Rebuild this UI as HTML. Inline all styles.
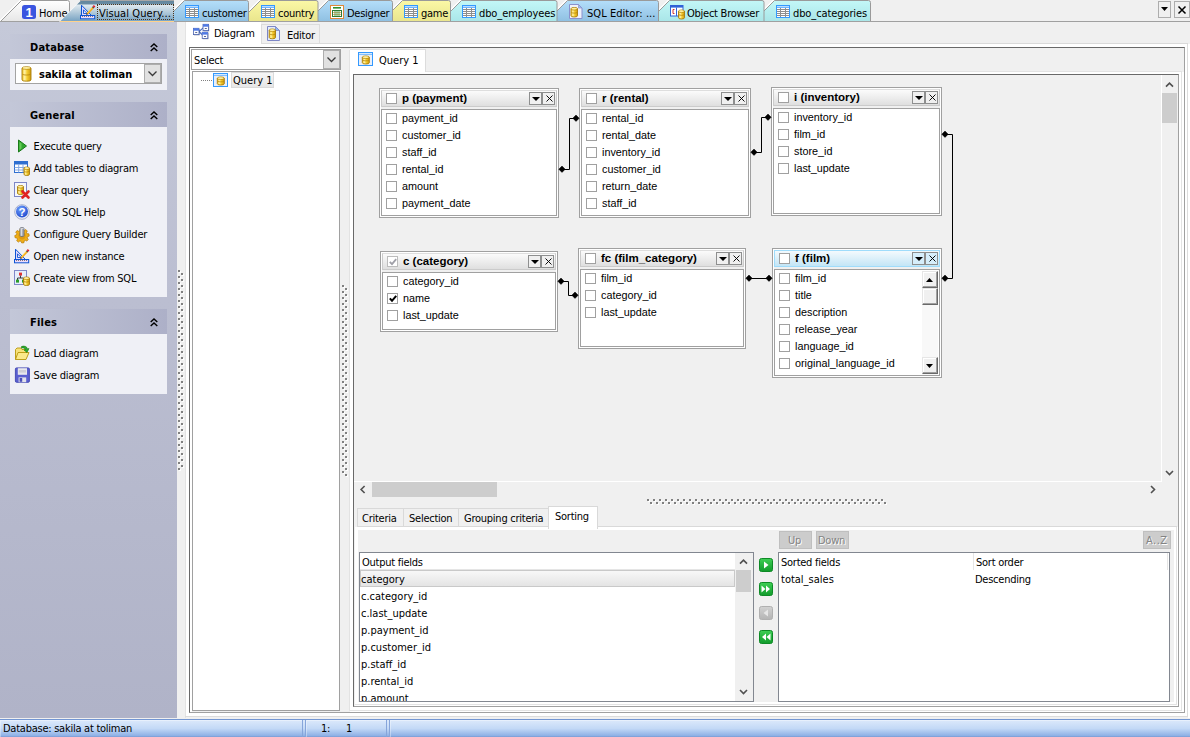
<!DOCTYPE html>
<html><head><meta charset="utf-8"><title>Visual Query Builder</title>
<style>
*{box-sizing:border-box;margin:0;padding:0}
html,body{width:1190px;height:737px;overflow:hidden;background:#f0f0f0}
body{position:relative;font-family:"DejaVu Sans Condensed","Liberation Sans",sans-serif;font-size:11px;letter-spacing:-0.25px;color:#000;line-height:13px}
.a{position:absolute}
.t{position:absolute;white-space:nowrap;height:13px;line-height:13px;margin-top:1px}
.b{letter-spacing:0}
.shead .t{letter-spacing:0.2px}
.ar{font-family:"Liberation Sans",sans-serif;font-size:11px}
.b{font-weight:bold}
svg{position:absolute;overflow:visible}
/* sidebar */
#side{left:0;top:22px;width:177px;height:696px;background:linear-gradient(to bottom,#c5c9d9 0%,#bbbed1 40%,#b0b3c8 100%)}
.shead{left:10px;width:157px;height:25px;background:linear-gradient(to right,#c3c7d8,#adb0c8)}
.sbody{left:10px;width:157px;background:#eff0f6}
.shead .t{left:20px;top:6px;font-weight:bold;font-size:11px}
.item{left:33.5px}
/* table boxes */
.box{border:1px solid #a0a0a0;background:#f0f0f0;box-shadow:inset 0 0 0 1px #fff}
.box .ttl{left:1px;right:1px;top:1px;height:17px;background:linear-gradient(to bottom,#fbfbfb,#dfdfdf);border:1px solid #cbcbcb;border-top-color:#dedede}
.box.act .ttl{background:linear-gradient(to bottom,#f4fafd,#c3e5f6);border:1px solid #9fdcfb}
.box .lst{left:1px;right:1px;top:20px;bottom:1px;background:#fff;border:1px solid #a0a0a0}
.cb{position:absolute;width:11px;height:11px;border:1px solid #a0a0a0;background:#fff}
.bt{position:absolute;width:13px;height:13px;border:1px solid #8e8f8f;top:3px}
.f{position:absolute;left:22px;white-space:nowrap;font-family:"Liberation Sans",sans-serif;font-size:10.8px;letter-spacing:0;height:13px;line-height:13px}
.tt{position:absolute;left:22px;top:3px;white-space:nowrap;font-family:"Liberation Sans",sans-serif;font-size:11.5px;letter-spacing:0;font-weight:bold;height:13px;line-height:13px}
</style></head>
<body>
<svg width="0" height="0" style="left:0;top:0"><defs><linearGradient id="cg" x1="0" y1="0" x2="1" y2="0"><stop offset="0" stop-color="#f3c625"/><stop offset="0.3" stop-color="#fff3a8"/><stop offset="0.55" stop-color="#f6cf33"/><stop offset="1" stop-color="#d09a0c"/></linearGradient></defs></svg><div class="a" style="left:0;top:0;width:1190px;height:22px;background:#f0f0f0"></div><div class="a" style="left:0;top:21px;width:1190px;height:1px;background:#a0a0a0;z-index:46"></div><svg style="left:1px;top:0;z-index:20" width="70" height="22" viewBox="0 0 70 22"><defs><linearGradient id="tg0" x1="0" y1="0" x2="0" y2="1"><stop offset="0" stop-color="#ffffff"/><stop offset="1" stop-color="#e6e6e6"/></linearGradient></defs><path d="M-0.5 21.5L20.5 0.5H66.5Q68.5 0.5 68.5 2.5V21.5z" fill="url(#tg0)"/><path d="M-1.2 20.800L19.800 -0.200" stroke="#fff" stroke-width="1.300" fill="none"/><path d="M-0.5 21.5L20.5 0.5H66.5Q68.5 0.5 68.5 2.5V21.5" stroke="#9a9a9a" stroke-width="1" fill="none"/></svg><svg style="left:164px;top:0;z-index:39" width="86" height="22" viewBox="0 0 86 22"><defs><linearGradient id="tg1" x1="0" y1="0" x2="0" y2="1"><stop offset="0" stop-color="#b4defa"/><stop offset="1" stop-color="#8fc0e2"/></linearGradient></defs><path d="M-0.5 21.5L20.5 0.5H82.5Q84.5 0.5 84.5 2.5V21.5z" fill="url(#tg1)"/><path d="M-1.2 20.800L19.800 -0.200" stroke="#fff" stroke-width="1.300" fill="none"/><path d="M-0.5 21.5L20.5 0.5H82.5Q84.5 0.5 84.5 2.5V21.5" stroke="#9a9a9a" stroke-width="1" fill="none"/></svg><svg style="left:239.5px;top:0;z-index:38" width="79.5" height="22" viewBox="0 0 79.5 22"><defs><linearGradient id="tg2" x1="0" y1="0" x2="0" y2="1"><stop offset="0" stop-color="#fbf8a6"/><stop offset="1" stop-color="#e9e58c"/></linearGradient></defs><path d="M-0.5 21.5L20.5 0.5H76.0Q78.0 0.5 78.0 2.5V21.5z" fill="url(#tg2)"/><path d="M-1.2 20.800L19.800 -0.200" stroke="#fff" stroke-width="1.300" fill="none"/><path d="M-0.5 21.5L20.5 0.5H76.0Q78.0 0.5 78.0 2.5V21.5" stroke="#9a9a9a" stroke-width="1" fill="none"/></svg><svg style="left:308px;top:0;z-index:37" width="86" height="22" viewBox="0 0 86 22"><defs><linearGradient id="tg3" x1="0" y1="0" x2="0" y2="1"><stop offset="0" stop-color="#b4defa"/><stop offset="1" stop-color="#8fc0e2"/></linearGradient></defs><path d="M-0.5 21.5L20.5 0.5H82.5Q84.5 0.5 84.5 2.5V21.5z" fill="url(#tg3)"/><path d="M-1.2 20.800L19.800 -0.200" stroke="#fff" stroke-width="1.300" fill="none"/><path d="M-0.5 21.5L20.5 0.5H82.5Q84.5 0.5 84.5 2.5V21.5" stroke="#9a9a9a" stroke-width="1" fill="none"/></svg><svg style="left:382px;top:0;z-index:36" width="70" height="22" viewBox="0 0 70 22"><defs><linearGradient id="tg4" x1="0" y1="0" x2="0" y2="1"><stop offset="0" stop-color="#fbf8a6"/><stop offset="1" stop-color="#e9e58c"/></linearGradient></defs><path d="M-0.5 21.5L20.5 0.5H66.5Q68.5 0.5 68.5 2.5V21.5z" fill="url(#tg4)"/><path d="M-1.2 20.800L19.800 -0.200" stroke="#fff" stroke-width="1.300" fill="none"/><path d="M-0.5 21.5L20.5 0.5H66.5Q68.5 0.5 68.5 2.5V21.5" stroke="#9a9a9a" stroke-width="1" fill="none"/></svg><svg style="left:440.5px;top:0;z-index:35" width="117.5" height="22" viewBox="0 0 117.5 22"><defs><linearGradient id="tg5" x1="0" y1="0" x2="0" y2="1"><stop offset="0" stop-color="#c3f7f7"/><stop offset="1" stop-color="#a9e6e8"/></linearGradient></defs><path d="M-0.5 21.5L20.5 0.5H114.0Q116.0 0.5 116.0 2.5V21.5z" fill="url(#tg5)"/><path d="M-1.2 20.800L19.800 -0.200" stroke="#fff" stroke-width="1.300" fill="none"/><path d="M-0.5 21.5L20.5 0.5H114.0Q116.0 0.5 116.0 2.5V21.5" stroke="#9a9a9a" stroke-width="1" fill="none"/></svg><svg style="left:547px;top:0;z-index:34" width="113" height="22" viewBox="0 0 113 22"><defs><linearGradient id="tg6" x1="0" y1="0" x2="0" y2="1"><stop offset="0" stop-color="#b4defa"/><stop offset="1" stop-color="#8fc0e2"/></linearGradient></defs><path d="M-0.5 21.5L20.5 0.5H109.5Q111.5 0.5 111.5 2.5V21.5z" fill="url(#tg6)"/><path d="M-1.2 20.800L19.800 -0.200" stroke="#fff" stroke-width="1.300" fill="none"/><path d="M-0.5 21.5L20.5 0.5H109.5Q111.5 0.5 111.5 2.5V21.5" stroke="#9a9a9a" stroke-width="1" fill="none"/></svg><svg style="left:648.5px;top:0;z-index:33" width="116.5" height="22" viewBox="0 0 116.5 22"><defs><linearGradient id="tg7" x1="0" y1="0" x2="0" y2="1"><stop offset="0" stop-color="#c3f7f7"/><stop offset="1" stop-color="#a9e6e8"/></linearGradient></defs><path d="M-0.5 21.5L20.5 0.5H113.0Q115.0 0.5 115.0 2.5V21.5z" fill="url(#tg7)"/><path d="M-1.2 20.800L19.800 -0.200" stroke="#fff" stroke-width="1.300" fill="none"/><path d="M-0.5 21.5L20.5 0.5H113.0Q115.0 0.5 115.0 2.5V21.5" stroke="#9a9a9a" stroke-width="1" fill="none"/></svg><svg style="left:754px;top:0;z-index:32" width="118" height="22" viewBox="0 0 118 22"><defs><linearGradient id="tg8" x1="0" y1="0" x2="0" y2="1"><stop offset="0" stop-color="#c3f7f7"/><stop offset="1" stop-color="#a9e6e8"/></linearGradient></defs><path d="M-0.5 21.5L20.5 0.5H114.5Q116.5 0.5 116.5 2.5V21.5z" fill="url(#tg8)"/><path d="M-1.2 20.800L19.800 -0.200" stroke="#fff" stroke-width="1.300" fill="none"/><path d="M-0.5 21.5L20.5 0.5H114.5Q116.5 0.5 116.5 2.5V21.5" stroke="#9a9a9a" stroke-width="1" fill="none"/></svg><div class="t" style="left:39px;top:6px;z-index:21">Home</div><div class="t" style="left:202px;top:6px;z-index:45">customer</div><div class="t" style="left:278px;top:6px;z-index:45">country</div><div class="t" style="left:347px;top:6px;z-index:45">Designer</div><div class="t" style="left:421px;top:6px;z-index:45">game</div><div class="t" style="left:479px;top:6px;z-index:45;letter-spacing:-0.1px">dbo_employees</div><div class="t" style="left:587px;top:6px;z-index:45;letter-spacing:0.05px">SQL Editor: ...</div><div class="t" style="left:687px;top:6px;z-index:45">Object Browser</div><div class="t" style="left:793px;top:6px;z-index:45;letter-spacing:-0.1px">dbo_categories</div><svg style="left:22px;top:5px;z-index:21" width="14" height="14" viewBox="0 0 14 14"><rect width="14" height="14" rx="2.5" fill="#3a55e0"/><text x="7" y="12" font-family="Liberation Sans,sans-serif" font-weight="bold" font-size="13" fill="#fff" text-anchor="middle">1</text></svg><svg style="z-index:45;left:185px;top:5px" width="14" height="13" viewBox="0 0 14 13" shape-rendering="crispEdges"><rect x="0" y="0" width="14" height="13" fill="#3399ff"/><rect x="1" y="1" width="12" height="1" fill="#b9dcff"/><rect x="1" y="2" width="12" height="1" fill="#6db5ff"/><rect x="1" y="3" width="12" height="9" fill="#8e8e8e"/><rect x="1" y="3" width="3" height="1" fill="#fff"/><rect x="5" y="3" width="4" height="1" fill="#fff"/><rect x="10" y="3" width="3" height="1" fill="#fff"/><rect x="1" y="5" width="3" height="1" fill="#fff"/><rect x="5" y="5" width="4" height="1" fill="#fff"/><rect x="10" y="5" width="3" height="1" fill="#fff"/><rect x="1" y="7" width="3" height="1" fill="#fff"/><rect x="5" y="7" width="4" height="1" fill="#fff"/><rect x="10" y="7" width="3" height="1" fill="#fff"/><rect x="1" y="9" width="3" height="1" fill="#fff"/><rect x="5" y="9" width="4" height="1" fill="#fff"/><rect x="10" y="9" width="3" height="1" fill="#fff"/><rect x="1" y="11" width="3" height="1" fill="#fff"/><rect x="5" y="11" width="4" height="1" fill="#fff"/><rect x="10" y="11" width="3" height="1" fill="#fff"/></svg><svg style="z-index:45;left:261px;top:5px" width="14" height="13" viewBox="0 0 14 13" shape-rendering="crispEdges"><rect x="0" y="0" width="14" height="13" fill="#3399ff"/><rect x="1" y="1" width="12" height="1" fill="#b9dcff"/><rect x="1" y="2" width="12" height="1" fill="#6db5ff"/><rect x="1" y="3" width="12" height="9" fill="#8e8e8e"/><rect x="1" y="3" width="3" height="1" fill="#fff"/><rect x="5" y="3" width="4" height="1" fill="#fff"/><rect x="10" y="3" width="3" height="1" fill="#fff"/><rect x="1" y="5" width="3" height="1" fill="#fff"/><rect x="5" y="5" width="4" height="1" fill="#fff"/><rect x="10" y="5" width="3" height="1" fill="#fff"/><rect x="1" y="7" width="3" height="1" fill="#fff"/><rect x="5" y="7" width="4" height="1" fill="#fff"/><rect x="10" y="7" width="3" height="1" fill="#fff"/><rect x="1" y="9" width="3" height="1" fill="#fff"/><rect x="5" y="9" width="4" height="1" fill="#fff"/><rect x="10" y="9" width="3" height="1" fill="#fff"/><rect x="1" y="11" width="3" height="1" fill="#fff"/><rect x="5" y="11" width="4" height="1" fill="#fff"/><rect x="10" y="11" width="3" height="1" fill="#fff"/></svg><svg style="z-index:45;left:404px;top:5px" width="14" height="13" viewBox="0 0 14 13" shape-rendering="crispEdges"><rect x="0" y="0" width="14" height="13" fill="#3399ff"/><rect x="1" y="1" width="12" height="1" fill="#b9dcff"/><rect x="1" y="2" width="12" height="1" fill="#6db5ff"/><rect x="1" y="3" width="12" height="9" fill="#8e8e8e"/><rect x="1" y="3" width="3" height="1" fill="#fff"/><rect x="5" y="3" width="4" height="1" fill="#fff"/><rect x="10" y="3" width="3" height="1" fill="#fff"/><rect x="1" y="5" width="3" height="1" fill="#fff"/><rect x="5" y="5" width="4" height="1" fill="#fff"/><rect x="10" y="5" width="3" height="1" fill="#fff"/><rect x="1" y="7" width="3" height="1" fill="#fff"/><rect x="5" y="7" width="4" height="1" fill="#fff"/><rect x="10" y="7" width="3" height="1" fill="#fff"/><rect x="1" y="9" width="3" height="1" fill="#fff"/><rect x="5" y="9" width="4" height="1" fill="#fff"/><rect x="10" y="9" width="3" height="1" fill="#fff"/><rect x="1" y="11" width="3" height="1" fill="#fff"/><rect x="5" y="11" width="4" height="1" fill="#fff"/><rect x="10" y="11" width="3" height="1" fill="#fff"/></svg><svg style="z-index:45;left:462px;top:5px" width="14" height="13" viewBox="0 0 14 13" shape-rendering="crispEdges"><rect x="0" y="0" width="14" height="13" fill="#3399ff"/><rect x="1" y="1" width="12" height="1" fill="#b9dcff"/><rect x="1" y="2" width="12" height="1" fill="#6db5ff"/><rect x="1" y="3" width="12" height="9" fill="#8e8e8e"/><rect x="1" y="3" width="3" height="1" fill="#fff"/><rect x="5" y="3" width="4" height="1" fill="#fff"/><rect x="10" y="3" width="3" height="1" fill="#fff"/><rect x="1" y="5" width="3" height="1" fill="#fff"/><rect x="5" y="5" width="4" height="1" fill="#fff"/><rect x="10" y="5" width="3" height="1" fill="#fff"/><rect x="1" y="7" width="3" height="1" fill="#fff"/><rect x="5" y="7" width="4" height="1" fill="#fff"/><rect x="10" y="7" width="3" height="1" fill="#fff"/><rect x="1" y="9" width="3" height="1" fill="#fff"/><rect x="5" y="9" width="4" height="1" fill="#fff"/><rect x="10" y="9" width="3" height="1" fill="#fff"/><rect x="1" y="11" width="3" height="1" fill="#fff"/><rect x="5" y="11" width="4" height="1" fill="#fff"/><rect x="10" y="11" width="3" height="1" fill="#fff"/></svg><svg style="z-index:45;left:776px;top:5px" width="14" height="13" viewBox="0 0 14 13" shape-rendering="crispEdges"><rect x="0" y="0" width="14" height="13" fill="#3399ff"/><rect x="1" y="1" width="12" height="1" fill="#b9dcff"/><rect x="1" y="2" width="12" height="1" fill="#6db5ff"/><rect x="1" y="3" width="12" height="9" fill="#8e8e8e"/><rect x="1" y="3" width="3" height="1" fill="#fff"/><rect x="5" y="3" width="4" height="1" fill="#fff"/><rect x="10" y="3" width="3" height="1" fill="#fff"/><rect x="1" y="5" width="3" height="1" fill="#fff"/><rect x="5" y="5" width="4" height="1" fill="#fff"/><rect x="10" y="5" width="3" height="1" fill="#fff"/><rect x="1" y="7" width="3" height="1" fill="#fff"/><rect x="5" y="7" width="4" height="1" fill="#fff"/><rect x="10" y="7" width="3" height="1" fill="#fff"/><rect x="1" y="9" width="3" height="1" fill="#fff"/><rect x="5" y="9" width="4" height="1" fill="#fff"/><rect x="10" y="9" width="3" height="1" fill="#fff"/><rect x="1" y="11" width="3" height="1" fill="#fff"/><rect x="5" y="11" width="4" height="1" fill="#fff"/><rect x="10" y="11" width="3" height="1" fill="#fff"/></svg><svg style="z-index:45;left:330px;top:5px" width="14" height="14" viewBox="0 0 14 14"><rect x="0.5" y="0.5" width="13" height="13" fill="#fff" stroke="#de8a3a"/><rect x="3" y="2" width="8" height="1.6" fill="#2f8f2f"/><rect x="2.5" y="5.5" width="9" height="6" fill="#fff" stroke="#2d7a32"/><path d="M3 7.5h8M3 9.5h8" stroke="#e8a060" stroke-width="0.8" fill="none"/><path d="M5 6v5M7 6v5M9 6v5" stroke="#3c9a3c" stroke-width="0.9" fill="none"/></svg><svg style="z-index:45;left:569px;top:4px" width="14" height="15" viewBox="0 0 14 15"><path d="M0.5 0.5h9l3.500 3.500v10.500h-12.500z" fill="#eef1fb" stroke="#8a90cc"/><path d="M9.500 0.500v3.500h3.500z" fill="#9cc0f0" stroke="#8a90cc" stroke-width="0.7"/><path d="M2 4.8V11.7a3.25 1.3 0 0 0 6.5 0V4.8a3.25 1.3 0 0 0 -6.5 0z" fill="url(#cg)" stroke="#a67c0c" stroke-width="0.9"/><ellipse cx="5.25" cy="4.8" rx="2.75" ry="1.0" fill="#fdeea0"/><path d="M2 4.8a3.25 1.3 0 0 0 6.5 0" fill="none" stroke="#b8860b" stroke-width="0.7"/><path d="M2.4 8.440000000000001a3.25 1.3 0 0 0 5.7 0" fill="none" stroke="#b8860b" stroke-width="0.8"/></svg><svg style="z-index:45;left:670px;top:5px" width="15" height="15" viewBox="0 0 15 15"><rect x="0.5" y="0.5" width="12.5" height="10.5" fill="#fff" stroke="#2f62d8"/><rect x="1" y="1" width="12" height="1.6" fill="#2f62d8"/><path d="M6.500 2.500v8.500" stroke="#2f62d8"/><path d="M4.500 4.500h-1.500v4h1.500" stroke="#d03030" fill="none" stroke-width="1"/><path d="M8.5 6.3V12.7a3.0 1.3 0 0 0 6 0V6.3a3.0 1.3 0 0 0 -6 0z" fill="url(#cg)" stroke="#a67c0c" stroke-width="0.9"/><ellipse cx="11.5" cy="6.3" rx="2.5" ry="1.0" fill="#fdeea0"/><path d="M8.5 6.3a3.0 1.3 0 0 0 6 0" fill="none" stroke="#b8860b" stroke-width="0.7"/><path d="M8.9 9.68a3.0 1.3 0 0 0 5.2 0" fill="none" stroke="#b8860b" stroke-width="0.8"/></svg><svg style="left:60px;top:0;z-index:50" width="114" height="22" viewBox="0 0 114 22"><defs><linearGradient id="tga" x1="0" y1="0" x2="0" y2="1"><stop offset="0" stop-color="#62859c"/><stop offset="0.19" stop-color="#6a8da4"/><stop offset="0.2" stop-color="#e2ebf1"/><stop offset="0.55" stop-color="#b6cddc"/><stop offset="1" stop-color="#78a3c3"/></linearGradient></defs><path d="M-1 22L21 0H114V22z" fill="#fff"/><path d="M0.5 21L21 0.5H114V21z" fill="url(#tga)"/><path d="M20 0.5H114" stroke="#a6a6a6" stroke-width="1"/><path d="M0 21.5H114" stroke="#ffd28a" stroke-width="1"/></svg><div class="a" style="left:97px;top:4px;width:77px;height:16px;border:1px dotted #4a3520;z-index:51"></div><svg style="z-index:51;left:80px;top:4px" width="16" height="16" viewBox="0 0 16 16"><path d="M1.5 1.200V11.500H11.500z" fill="#e2d9fd" stroke="#0d54d4" stroke-width="1" stroke-linejoin="miter"/><path d="M3.500 5.800V9.500H7.200z" fill="#f4f0ff" stroke="#0d54d4" stroke-width="0.9"/><rect x="0.500" y="11.500" width="14.200" height="3.300" fill="#eadcfd" stroke="#0d54d4" stroke-width="1"/><path d="M2.500 12v1M4.500 12v1M6.500 12v1M8.500 12v1M10.500 12v1M12.500 12v1" stroke="#6a5a5a" stroke-width="0.800"/><path d="M7.300 9.800L13.300 3.300" stroke="#f7a81e" stroke-width="1.900"/><path d="M6.900 9.300L12.800 2.900" stroke="#ffe24a" stroke-width="0.700"/><path d="M6.200 10.900l0.500-1.800 1.300 1.200z" fill="#3a2a1a"/><path d="M12.700 3.900l0.900-1" stroke="#4a4a4a" stroke-width="1.800"/><path d="M13.500 3l1.100-1.200" stroke="#ea1c2a" stroke-width="2.200"/></svg><div class="t" style="left:99px;top:6px;z-index:51;letter-spacing:0.1px">Visual Query...</div><div class="a" style="left:1158px;top:1px;width:13px;height:17px;border:1px solid #adadad;background:#f0f0f0"></div><svg style="left:1161px;top:7px" width="7" height="4" viewBox="0 0 7 4"><path d="M0 0h7l-3.5 4z" fill="#000"/></svg><div class="a" style="left:1174px;top:1px;width:16px;height:17px;border:1px solid #adadad;background:#f0f0f0"></div><svg style="left:1178px;top:6px" width="8" height="8" viewBox="0 0 8 8"><path d="M0.5 0.5l7 7M7.5 0.5l-7 7" stroke="#000" stroke-width="1.5"/></svg>
<div id="side" class="a"><div class="a shead" style="top:12px"><div class="t">Database</div></div><svg style="left:150px;top:21px" width="8" height="9" viewBox="0 0 8 9"><path d="M0.7 4l3.3-3 3.3 3M0.7 8l3.3-3 3.3 3" stroke="#000" stroke-width="1.4" fill="none"/></svg><div class="a sbody" style="top:37px;height:31px"></div><div class="a" style="left:15px;top:41px;width:147px;height:21px;border:1px solid #a3a3a3;background:#fff"></div><div class="a" style="left:144px;top:42px;width:17px;height:19px;border:1px solid #adadad;background:#e1e1e1"></div><svg style="left:148px;top:49px" width="9" height="5" viewBox="0 0 9 5"><path d="M0.500 0.500l4 4 4-4" stroke="#3a3a3a" stroke-width="1.300" fill="none"/></svg><svg style="left:21px;top:44px" width="11" height="16" viewBox="0 0 11 16"><path d="M1 2.1V13.9a4.5 1.3 0 0 0 9 0V2.1a4.5 1.3 0 0 0 -9 0z" fill="url(#cg)" stroke="#a67c0c" stroke-width="0.9"/><ellipse cx="5.5" cy="2.1" rx="4.0" ry="1.0" fill="#fdeea0"/><path d="M1 2.1a4.5 1.3 0 0 0 9 0" fill="none" stroke="#b8860b" stroke-width="0.7"/><path d="M1.4 8.288a4.5 1.3 0 0 0 8.2 0" fill="none" stroke="#b8860b" stroke-width="0.8"/></svg><div class="t b" style="left:39px;top:45px;font-size:11px">sakila at toliman</div><div class="a shead" style="top:80px"><div class="t">General</div></div><svg style="left:150px;top:89px" width="8" height="9" viewBox="0 0 8 9"><path d="M0.7 4l3.3-3 3.3 3M0.7 8l3.3-3 3.3 3" stroke="#000" stroke-width="1.4" fill="none"/></svg><div class="a sbody" style="top:105px;height:170px"></div><svg style="left:14px;top:116px" width="16" height="16" viewBox="0 0 16 16"><path d="M4.5 2v12l8-6z" fill="#2fa62f" stroke="#1a7a1a" stroke-width="1" stroke-linejoin="round"/><path d="M5.5 4v8l2-1.5v-5z" fill="#7ddc6a" opacity="0.7"/></svg><div class="t item" style="top:117px">Execute query</div><svg style="left:14px;top:138px" width="16" height="16" viewBox="0 0 16 16"><rect x="0.5" y="1.5" width="13" height="11" fill="#fff" stroke="#2f6fd0"/><rect x="1" y="2" width="12" height="2.5" fill="#2f6fd0"/><path d="M0.5 7.5h13M0.5 10h13M4.7 4.5v8M9 4.5v8" stroke="#7da3e0" stroke-width="0.9" fill="none"/><path d="M10 8.3V14.2a2.75 1.3 0 0 0 5.5 0V8.3a2.75 1.3 0 0 0 -5.5 0z" fill="url(#cg)" stroke="#a67c0c" stroke-width="0.9"/><ellipse cx="12.75" cy="8.3" rx="2.25" ry="1.0" fill="#fdeea0"/><path d="M10 8.3a2.75 1.3 0 0 0 5.5 0" fill="none" stroke="#b8860b" stroke-width="0.7"/><path d="M10.4 11.42a2.75 1.3 0 0 0 4.7 0" fill="none" stroke="#b8860b" stroke-width="0.8"/></svg><div class="t item" style="top:139px">Add tables to diagram</div><svg style="left:14px;top:160px" width="16" height="16" viewBox="0 0 16 16"><rect x="0.5" y="0.5" width="12" height="14" fill="#f4f6fb" stroke="#7d86c6"/><path d="M3.5 4.8V11.2a3.0 1.3 0 0 0 6 0V4.8a3.0 1.3 0 0 0 -6 0z" fill="url(#cg)" stroke="#a67c0c" stroke-width="0.9"/><ellipse cx="6.5" cy="4.8" rx="2.5" ry="1.0" fill="#fdeea0"/><path d="M3.5 4.8a3.0 1.3 0 0 0 6 0" fill="none" stroke="#b8860b" stroke-width="0.7"/><path d="M3.9 8.18a3.0 1.3 0 0 0 5.2 0" fill="none" stroke="#b8860b" stroke-width="0.8"/><path d="M8.5 9.5l6 6M14.5 9.5l-6 6" stroke="#e02222" stroke-width="2.6" stroke-linecap="round"/></svg><div class="t item" style="top:161px">Clear query</div><svg style="left:14px;top:182px" width="16" height="16" viewBox="0 0 16 16"><defs><radialGradient id="hg" cx="0.4" cy="0.3" r="0.8"><stop offset="0" stop-color="#6fa0ff"/><stop offset="1" stop-color="#1742c8"/></radialGradient></defs><circle cx="8" cy="8" r="7.3" fill="#e8ecf8" stroke="#9aa3c0" stroke-width="0.8"/><circle cx="8" cy="7.6" r="6" fill="url(#hg)"/><text x="8" y="12" font-family="Liberation Sans,sans-serif" font-weight="bold" font-size="11.5" fill="#fff" text-anchor="middle">?</text></svg><div class="t item" style="top:183px">Show SQL Help</div><svg style="left:14px;top:204px" width="16" height="16" viewBox="0 0 16 16"><path d="M13.17 11.94L14.28 13.32L12.89 15.09L11.29 14.33L10.14 14.97L9.95 16.73L7.72 16.99L7.12 15.33L5.86 14.97L4.48 16.08L2.71 14.69L3.47 13.09L2.83 11.94L1.07 11.75L0.81 9.52L2.47 8.92L2.83 7.66L1.72 6.28L3.11 4.51L4.71 5.27L5.86 4.63L6.05 2.87L8.28 2.61L8.88 4.27L10.14 4.63L11.52 3.52L13.29 4.91L12.53 6.51L13.17 7.66L14.93 7.85L15.19 10.08L13.53 10.68z" fill="#f0ae18" stroke="#b47a06" stroke-width="0.7" stroke-linejoin="round"/><circle cx="8" cy="9.8" r="3.6" fill="#dc9a12"/><path d="M6 2.4V9.6a2 0.9 0 0 0 4 0V2.4a2 0.9 0 0 0 -4 0z" fill="#a9adb6" stroke="#666a73" stroke-width="0.8"/><rect x="6.7" y="3" width="1.1" height="6.8" fill="#e4e6ea"/><ellipse cx="8" cy="2.4" rx="1.6" ry="0.6" fill="#d4d6dc"/></svg><div class="t item" style="top:205px">Configure Query Builder</div><svg style="left:14px;top:226px" width="16" height="16" viewBox="0 0 16 16"><path d="M1.5 1.200V11.500H11.500z" fill="#e2d9fd" stroke="#0d54d4" stroke-width="1" stroke-linejoin="miter"/><path d="M3.500 5.800V9.500H7.200z" fill="#f4f0ff" stroke="#0d54d4" stroke-width="0.9"/><rect x="0.500" y="11.500" width="14.200" height="3.300" fill="#eadcfd" stroke="#0d54d4" stroke-width="1"/><path d="M2.500 12v1M4.500 12v1M6.500 12v1M8.500 12v1M10.500 12v1M12.500 12v1" stroke="#6a5a5a" stroke-width="0.800"/><path d="M7.300 9.800L13.300 3.300" stroke="#f7a81e" stroke-width="1.900"/><path d="M6.900 9.300L12.800 2.900" stroke="#ffe24a" stroke-width="0.700"/><path d="M6.200 10.900l0.500-1.800 1.300 1.200z" fill="#3a2a1a"/><path d="M12.700 3.900l0.900-1" stroke="#4a4a4a" stroke-width="1.800"/><path d="M13.500 3l1.100-1.200" stroke="#ea1c2a" stroke-width="2.200"/></svg><div class="t item" style="top:227px">Open new instance</div><svg style="left:14px;top:248px" width="16" height="16" viewBox="0 0 16 16"><rect x="0.5" y="0.5" width="12" height="14" fill="#e6eefb" stroke="#8088c8"/><rect x="5" y="2.6" width="3" height="3" fill="#e23030"/><path d="M6.5 5.6v2.4M3.5 10V8h6v2" stroke="#2a2a2a" stroke-width="0.9" fill="none"/><rect x="2" y="9.6" width="3" height="3" fill="#2a9b2a"/><rect x="8" y="9.6" width="3" height="3" fill="#2a9b2a"/><path d="M9.5 8.3V14.2a3.0 1.3 0 0 0 6 0V8.3a3.0 1.3 0 0 0 -6 0z" fill="url(#cg)" stroke="#a67c0c" stroke-width="0.9"/><ellipse cx="12.5" cy="8.3" rx="2.5" ry="1.0" fill="#fdeea0"/><path d="M9.5 8.3a3.0 1.3 0 0 0 6 0" fill="none" stroke="#b8860b" stroke-width="0.7"/><path d="M9.9 11.42a3.0 1.3 0 0 0 5.2 0" fill="none" stroke="#b8860b" stroke-width="0.8"/></svg><div class="t item" style="top:249px">Create view from SQL</div><div class="a shead" style="top:287px"><div class="t">Files</div></div><svg style="left:150px;top:296px" width="8" height="9" viewBox="0 0 8 9"><path d="M0.7 4l3.3-3 3.3 3M0.7 8l3.3-3 3.3 3" stroke="#000" stroke-width="1.4" fill="none"/></svg><div class="a sbody" style="top:312px;height:60px"></div><svg style="left:14px;top:323px" width="16" height="16" viewBox="0 0 16 16"><path d="M1.500 14.500v-10l1.500-1.500h4l1 1.500h4.500v3" fill="#f7e27a" stroke="#b8960b" stroke-width="0.9"/><path d="M1.500 14.500l2.500-7h11l-3 7z" fill="#fbe98a" stroke="#b8960b" stroke-width="0.9" stroke-linejoin="round"/><path d="M7.500 1.500c3-1 5.500 0 6 2.500l1.500-0.500-2 4-3-2.500 1.500-0.400c-0.600-1.400-2-2-4-1.600z" fill="#2faa2f" stroke="#157a15" stroke-width="0.6"/></svg><div class="t item" style="top:324px">Load diagram</div><svg style="left:14px;top:345px" width="16" height="16" viewBox="0 0 16 16"><rect x="1.4" y="0.9" width="14" height="14.400" rx="1.200" fill="#5a5fd0" stroke="#4045b0" stroke-width="0.9"/><rect x="3.800" y="1.200" width="9.200" height="6.600" fill="#e8e8ec"/><rect x="4.800" y="3" width="7.200" height="2.600" fill="#cfcfd6"/><rect x="4.600" y="10.400" width="7.600" height="4.800" fill="#e2e2ea"/><rect x="5.600" y="11" width="2.600" height="3.800" fill="#4a4fb8"/></svg><div class="t item" style="top:346px">Save diagram</div></div>
<div class="a" style="left:177px;top:22px;width:1013px;height:696px;background:#f0f0f0;"></div><div class="a" style="left:186px;top:44px;width:1002px;height:673px;background:#fff;"></div><div class="a" style="left:185px;top:22px;width:1px;height:696px;background:#e3e3e3"></div><div class="a" style="left:186px;top:43px;width:1002px;height:1px;background:#dadada"></div><div class="a" style="left:1187px;top:44px;width:1px;height:673px;background:#dcdcdc"></div><div class="a" style="left:185px;top:716px;width:1003px;height:1px;background:#dcdcdc"></div><div class="a" style="left:1188px;top:44px;width:2px;height:674px;background:#fff;"></div><div class="a" style="left:186px;top:22px;width:75px;height:23px;background:#fff;"></div><svg style="left:193px;top:24px" width="16" height="16" viewBox="0 0 16 16"><path d="M6 7.500l4.500-3.800M6 7.500l4 4" stroke="#4a6ec0" stroke-width="1.100" fill="none"/><rect x="1.0" y="5.1" width="5.600" height="6.200" fill="#2c3a5e" opacity="0.55"/><rect x="0.4" y="4.3" width="5.600" height="6.300" fill="#fbfcff" stroke="#4a63b0" stroke-width="0.800"/><rect x="0.4" y="4.3" width="5.600" height="2.400" fill="#4f7ae6"/><rect x="2.2" y="8.1" width="2" height="0.900" fill="#4a5a88"/><rect x="10.6" y="1.1" width="5.600" height="6.200" fill="#2c3a5e" opacity="0.55"/><rect x="10" y="0.3" width="5.600" height="6.300" fill="#fbfcff" stroke="#4a63b0" stroke-width="0.800"/><rect x="10" y="0.3" width="5.600" height="2.400" fill="#4f7ae6"/><rect x="11.8" y="4.1" width="2" height="0.900" fill="#4a5a88"/><rect x="9.799999999999999" y="9.0" width="5.600" height="6.200" fill="#2c3a5e" opacity="0.55"/><rect x="9.2" y="8.2" width="5.600" height="6.300" fill="#fbfcff" stroke="#4a63b0" stroke-width="0.800"/><rect x="9.2" y="8.2" width="5.600" height="2.400" fill="#4f7ae6"/><rect x="11.0" y="12.0" width="2" height="0.900" fill="#4a5a88"/></svg><div class="t" style="left:214px;top:26px">Diagram</div><div class="a" style="left:261px;top:24px;width:59px;height:20px;background:#f0f0f0;border:1px solid #dcdcdc"></div><svg style="left:267px;top:26px" width="13" height="15" viewBox="0 0 13 15"><path d="M0.500 0.500h8l4 4v10h-12z" fill="#e3edfb" stroke="#7d86c6"/><path d="M8.500 0.500v4h4z" fill="#8fbaf2" stroke="#7d86c6" stroke-width="0.800"/><path d="M2.2 4.3V11.5a3.15 1.3 0 0 0 6.3 0V4.3a3.15 1.3 0 0 0 -6.3 0z" fill="url(#cg)" stroke="#a67c0c" stroke-width="0.9"/><ellipse cx="5.35" cy="4.3" rx="2.65" ry="1.0" fill="#fdeea0"/><path d="M2.2 4.3a3.15 1.3 0 0 0 6.3 0" fill="none" stroke="#b8860b" stroke-width="0.7"/><path d="M2.6 8.096a3.15 1.3 0 0 0 5.5 0" fill="none" stroke="#b8860b" stroke-width="0.8"/></svg><div class="t" style="left:287px;top:28px">Editor</div><div class="a" style="left:189px;top:47px;width:996px;height:666px;background:#f0f0f0;border:1px solid #696969;border-right-color:#a0a0a0;border-bottom-color:#a0a0a0"></div><div class="a" style="left:190px;top:48px;width:151px;height:23px;background:#fff;"></div><div class="a" style="left:191px;top:49px;width:150px;height:21px;background:#fff;border:1px solid #a0a0a0"></div><div class="t" style="left:194px;top:53px">Select</div><div class="a" style="left:323px;top:50px;width:17px;height:19px;border:1px solid #adadad;background:#e1e1e1"></div><svg style="left:327.0px;top:57.0px" width="9" height="5" viewBox="0 0 9 5"><path d="M0.500 0.500l4 4 4-4" stroke="#3a3a3a" stroke-width="1.300" fill="none"/></svg><div class="a" style="left:192px;top:71px;width:148px;height:640px;background:#fff;border:1px solid #a0a0a0"></div><div class="a" style="left:190px;top:70px;width:2px;height:642px;background:#fff;"></div><svg style="left:201px;top:80px" width="12" height="1" viewBox="0 0 12 1"><path d="M0 0.500h12" stroke="#808080" stroke-width="1" stroke-dasharray="1 1"/></svg><svg style="left:213px;top:73px" width="15" height="14" viewBox="0 0 15 14"><rect x="0.5" y="0.5" width="14" height="13" fill="#e9eff9" stroke="#3399ff"/><rect x="1" y="1" width="13" height="1.2" fill="#d6ebff"/><rect x="1" y="2" width="13" height="1" fill="#3399ff" opacity="0.55"/><path d="M4.3 5.3V10.7a3.5 1.3 0 0 0 7 0V5.3a3.5 1.3 0 0 0 -7 0z" fill="url(#cg)" stroke="#a67c0c" stroke-width="0.9"/><ellipse cx="7.8" cy="5.3" rx="3.0" ry="1.0" fill="#fdeea0"/><path d="M4.3 5.3a3.5 1.3 0 0 0 7 0" fill="none" stroke="#b8860b" stroke-width="0.7"/><path d="M4.7 8.16a3.5 1.3 0 0 0 6.2 0" fill="none" stroke="#b8860b" stroke-width="0.8"/></svg><div class="a" style="left:231px;top:72px;width:43px;height:16px;background:linear-gradient(to bottom,#f6f6f6,#e6e6e6);border:1px solid #dadada"></div><div class="t" style="left:233px;top:73px;letter-spacing:0">Query 1</div><div class="a" style="left:341px;top:48px;width:9px;height:664px;background:#f0f0f0;"></div><div class="a" style="left:350px;top:48px;width:834px;height:24px;background:#f0f0f0;"></div><div class="a" style="left:349px;top:50px;width:1px;height:661px;background:#e3e3e3"></div><div class="a" style="left:350px;top:49px;width:76px;height:23px;background:#fff;border:1px solid #dcdcdc;border-bottom:none;border-left:none"></div><svg style="left:358px;top:52px" width="15" height="14" viewBox="0 0 15 14"><rect x="0.5" y="0.5" width="14" height="13" fill="#e9eff9" stroke="#3399ff"/><rect x="1" y="1" width="13" height="1.2" fill="#d6ebff"/><rect x="1" y="2" width="13" height="1" fill="#3399ff" opacity="0.55"/><path d="M4.3 5.3V10.7a3.5 1.3 0 0 0 7 0V5.3a3.5 1.3 0 0 0 -7 0z" fill="url(#cg)" stroke="#a67c0c" stroke-width="0.9"/><ellipse cx="7.8" cy="5.3" rx="3.0" ry="1.0" fill="#fdeea0"/><path d="M4.3 5.3a3.5 1.3 0 0 0 7 0" fill="none" stroke="#b8860b" stroke-width="0.7"/><path d="M4.7 8.16a3.5 1.3 0 0 0 6.2 0" fill="none" stroke="#b8860b" stroke-width="0.8"/></svg><div class="t" style="left:379px;top:53px;letter-spacing:0">Query 1</div><div class="a" style="left:426px;top:71px;width:756px;height:1px;background:#e3e3e3"></div><div class="a" style="left:350px;top:72px;width:834px;height:640px;background:#fff;"></div><div class="a" style="left:1181px;top:72px;width:1px;height:639px;background:#e3e3e3"></div><div class="a" style="left:350px;top:710px;width:832px;height:1px;background:#e3e3e3"></div><div class="a" style="left:353px;top:74px;width:826px;height:633px;background:#f0f0f0;border:1px solid #696969;border-right-color:#a0a0a0;border-bottom-color:#a0a0a0"></div><div class="a" style="left:354px;top:481px;width:808px;height:1px;background:#fff"></div><div class="a" style="left:1161px;top:75px;width:1px;height:407px;background:#fff"></div><div class="a" style="left:1162px;top:93px;width:15px;height:30px;background:#cdcdcd;"></div><svg style="left:1165px;top:82px" width="9" height="6" viewBox="0 0 9 6"><path d="M1 4.600l3.500-3.500 3.500 3.500" stroke="#505050" stroke-width="1.600" fill="none"/></svg><svg style="left:1165px;top:470px" width="9" height="6" viewBox="0 0 9 6"><path d="M1 1l3.500 3.500 3.500-3.500" stroke="#505050" stroke-width="1.600" fill="none"/></svg><div class="a" style="left:372px;top:482px;width:125px;height:15px;background:#cdcdcd;"></div><svg style="left:360px;top:485px" width="6" height="9" viewBox="0 0 6 9"><path d="M4.600 1l-3.500 3.500 3.500 3.500" stroke="#505050" stroke-width="1.600" fill="none"/></svg><svg style="left:1150px;top:485px" width="6" height="9" viewBox="0 0 6 9"><path d="M1 1l3.500 3.500-3.500 3.500" stroke="#505050" stroke-width="1.600" fill="none"/></svg><svg style="left:178px;top:270px" width="6" height="201" viewBox="0 0 6 201"><defs><pattern id="gv178" width="6" height="6" patternUnits="userSpaceOnUse"><rect x="1" y="1" width="2" height="2" fill="#fff"/><rect x="0" y="0" width="2" height="2" fill="#808080"/><rect x="4" y="4" width="2" height="2" fill="#fff"/><rect x="3" y="3" width="2" height="2" fill="#808080"/></pattern></defs><rect width="6" height="201" fill="url(#gv178)"/></svg><svg style="left:342px;top:285px" width="6" height="192" viewBox="0 0 6 192"><defs><pattern id="gv342" width="6" height="6" patternUnits="userSpaceOnUse"><rect x="1" y="1" width="2" height="2" fill="#fff"/><rect x="0" y="0" width="2" height="2" fill="#808080"/><rect x="4" y="4" width="2" height="2" fill="#fff"/><rect x="3" y="3" width="2" height="2" fill="#808080"/></pattern></defs><rect width="6" height="192" fill="url(#gv342)"/></svg><svg style="left:647px;top:499px" width="240" height="6" viewBox="0 0 240 6"><defs><pattern id="gh499" width="6" height="6" patternUnits="userSpaceOnUse"><rect x="1" y="1" width="2" height="2" fill="#fff"/><rect x="0" y="0" width="2" height="2" fill="#808080"/><rect x="4" y="4" width="2" height="2" fill="#fff"/><rect x="3" y="3" width="2" height="2" fill="#808080"/></pattern></defs><rect width="240" height="6" fill="url(#gh499)"/></svg>
<div class="a box" style="left:379px;top:88px;width:180px;height:130px"><div class="a ttl"></div><div class="cb" style="left:6px;top:4px"></div><div class="tt">p (payment)</div><div class="bt" style="left:149px;background:#f0f0f0"></div><div class="bt" style="left:162px;background:#f0f0f0"></div><svg style="left:152px;top:8px" width="8" height="4" viewBox="0 0 8 4"><path d="M0 0h8l-4 4z" fill="#000"/></svg><svg style="left:166px;top:6px" width="7" height="7" viewBox="0 0 7 7"><path d="M0.500 0.500l6 6M6.500 0.500l-6 6" stroke="#000" stroke-width="0.950"/></svg><div class="a lst"></div><div class="cb" style="left:6px;top:24px"></div><div class="f" style="top:23px">payment_id</div><div class="cb" style="left:6px;top:41px"></div><div class="f" style="top:40px">customer_id</div><div class="cb" style="left:6px;top:58px"></div><div class="f" style="top:57px">staff_id</div><div class="cb" style="left:6px;top:75px"></div><div class="f" style="top:74px">rental_id</div><div class="cb" style="left:6px;top:92px"></div><div class="f" style="top:91px">amount</div><div class="cb" style="left:6px;top:109px"></div><div class="f" style="top:108px">payment_date</div></div><div class="a box" style="left:579px;top:88px;width:172px;height:130px"><div class="a ttl"></div><div class="cb" style="left:6px;top:4px"></div><div class="tt">r (rental)</div><div class="bt" style="left:141px;background:#f0f0f0"></div><div class="bt" style="left:154px;background:#f0f0f0"></div><svg style="left:144px;top:8px" width="8" height="4" viewBox="0 0 8 4"><path d="M0 0h8l-4 4z" fill="#000"/></svg><svg style="left:158px;top:6px" width="7" height="7" viewBox="0 0 7 7"><path d="M0.500 0.500l6 6M6.500 0.500l-6 6" stroke="#000" stroke-width="0.950"/></svg><div class="a lst"></div><div class="cb" style="left:6px;top:24px"></div><div class="f" style="top:23px">rental_id</div><div class="cb" style="left:6px;top:41px"></div><div class="f" style="top:40px">rental_date</div><div class="cb" style="left:6px;top:58px"></div><div class="f" style="top:57px">inventory_id</div><div class="cb" style="left:6px;top:75px"></div><div class="f" style="top:74px">customer_id</div><div class="cb" style="left:6px;top:92px"></div><div class="f" style="top:91px">return_date</div><div class="cb" style="left:6px;top:109px"></div><div class="f" style="top:108px">staff_id</div></div><div class="a box" style="left:771px;top:87px;width:171px;height:129px"><div class="a ttl"></div><div class="cb" style="left:6px;top:4px"></div><div class="tt">i (inventory)</div><div class="bt" style="left:140px;background:#f0f0f0"></div><div class="bt" style="left:153px;background:#f0f0f0"></div><svg style="left:143px;top:8px" width="8" height="4" viewBox="0 0 8 4"><path d="M0 0h8l-4 4z" fill="#000"/></svg><svg style="left:157px;top:6px" width="7" height="7" viewBox="0 0 7 7"><path d="M0.500 0.500l6 6M6.500 0.500l-6 6" stroke="#000" stroke-width="0.950"/></svg><div class="a lst"></div><div class="cb" style="left:6px;top:24px"></div><div class="f" style="top:23px">inventory_id</div><div class="cb" style="left:6px;top:41px"></div><div class="f" style="top:40px">film_id</div><div class="cb" style="left:6px;top:58px"></div><div class="f" style="top:57px">store_id</div><div class="cb" style="left:6px;top:75px"></div><div class="f" style="top:74px">last_update</div></div><div class="a box" style="left:380px;top:251px;width:178px;height:81px"><div class="a ttl"></div><div class="cb" style="left:6px;top:4px;border-color:#bcbcbc"></div><svg style="left:8px;top:6px" width="8" height="8" viewBox="0 0 8 8"><path d="M0.800 3.800l2.200 2.400 4.200-5" stroke="#a0a0a8" stroke-width="1.800" fill="none"/></svg><div class="tt">c (category)</div><div class="bt" style="left:147px;background:#f0f0f0"></div><div class="bt" style="left:160px;background:#f0f0f0"></div><svg style="left:150px;top:8px" width="8" height="4" viewBox="0 0 8 4"><path d="M0 0h8l-4 4z" fill="#000"/></svg><svg style="left:164px;top:6px" width="7" height="7" viewBox="0 0 7 7"><path d="M0.500 0.500l6 6M6.500 0.500l-6 6" stroke="#000" stroke-width="0.950"/></svg><div class="a lst"></div><div class="cb" style="left:6px;top:24px"></div><div class="f" style="top:23px">category_id</div><div class="cb" style="left:6px;top:41px"></div><svg style="left:8px;top:43px" width="8" height="8" viewBox="0 0 8 8"><path d="M0.800 3.400l2.200 2.400 4.200-5" stroke="#000" stroke-width="2" fill="none"/></svg><div class="f" style="top:40px">name</div><div class="cb" style="left:6px;top:58px"></div><div class="f" style="top:57px">last_update</div></div><div class="a box" style="left:578px;top:248px;width:168px;height:101px"><div class="a ttl"></div><div class="cb" style="left:6px;top:4px"></div><div class="tt">fc (film_category)</div><div class="bt" style="left:137px;background:#f0f0f0"></div><div class="bt" style="left:150px;background:#f0f0f0"></div><svg style="left:140px;top:8px" width="8" height="4" viewBox="0 0 8 4"><path d="M0 0h8l-4 4z" fill="#000"/></svg><svg style="left:154px;top:6px" width="7" height="7" viewBox="0 0 7 7"><path d="M0.500 0.500l6 6M6.500 0.500l-6 6" stroke="#000" stroke-width="0.950"/></svg><div class="a lst"></div><div class="cb" style="left:6px;top:24px"></div><div class="f" style="top:23px">film_id</div><div class="cb" style="left:6px;top:41px"></div><div class="f" style="top:40px">category_id</div><div class="cb" style="left:6px;top:58px"></div><div class="f" style="top:57px">last_update</div></div><div class="a box act" style="left:772px;top:248px;width:170px;height:130px"><div class="a ttl"></div><div class="cb" style="left:6px;top:4px"></div><div class="tt">f (film)</div><div class="bt" style="left:139px;background:#d6eefb"></div><div class="bt" style="left:152px;background:#d6eefb"></div><svg style="left:142px;top:8px" width="8" height="4" viewBox="0 0 8 4"><path d="M0 0h8l-4 4z" fill="#000"/></svg><svg style="left:156px;top:6px" width="7" height="7" viewBox="0 0 7 7"><path d="M0.500 0.500l6 6M6.500 0.500l-6 6" stroke="#000" stroke-width="0.950"/></svg><div class="a lst"></div><div class="cb" style="left:6px;top:24px"></div><div class="f" style="top:23px">film_id</div><div class="cb" style="left:6px;top:41px"></div><div class="f" style="top:40px">title</div><div class="cb" style="left:6px;top:58px"></div><div class="f" style="top:57px">description</div><div class="cb" style="left:6px;top:75px"></div><div class="f" style="top:74px">release_year</div><div class="cb" style="left:6px;top:92px"></div><div class="f" style="top:91px">language_id</div><div class="cb" style="left:6px;top:109px"></div><div class="f" style="top:108px">original_language_id</div><div class="a" style="left:149px;top:22px;width:16px;height:104px;background:#f8f8f8"></div><div class="a" style="left:149px;top:22px;width:16px;height:17px;background:#f0f0f0;border:1px solid;border-color:#e6e6e6 #696969 #696969 #e6e6e6;box-shadow:inset -1px -1px 0 #a0a0a0,inset 1px 1px 0 #fff"></div><svg style="left:153px;top:29px" width="7" height="4" viewBox="0 0 7 4"><path d="M0 4h7l-3.500-4z" fill="#000"/></svg><div class="a" style="left:149px;top:39px;width:16px;height:17px;background:#f0f0f0;border:1px solid;border-color:#e6e6e6 #696969 #696969 #e6e6e6;box-shadow:inset -1px -1px 0 #a0a0a0,inset 1px 1px 0 #fff"></div><div class="a" style="left:149px;top:108px;width:16px;height:17px;background:#f0f0f0;border:1px solid;border-color:#e6e6e6 #696969 #696969 #e6e6e6;box-shadow:inset -1px -1px 0 #a0a0a0,inset 1px 1px 0 #fff"></div><svg style="left:153px;top:115px" width="7" height="4" viewBox="0 0 7 4"><path d="M0 0h7l-3.500 4z" fill="#000"/></svg></div><svg style="left:0;top:0" width="1190" height="737" viewBox="0 0 1190 737"><path d="M562 169.5H569.5V118.5H576" stroke="#000" stroke-width="1" fill="none"/><path d="M754 152.5H761.5V117.5H768" stroke="#000" stroke-width="1" fill="none"/><path d="M945 134.5H952.5V278.5H945" stroke="#000" stroke-width="1" fill="none"/><path d="M561 281.5H568.5V295.5H575" stroke="#000" stroke-width="1" fill="none"/><path d="M749 278.5H769" stroke="#000" stroke-width="1" fill="none"/><path d="M558.8 169.2L562 166.0L565.2 169.2L562 172.39999999999998z" fill="#000" stroke="#000" stroke-width="0.5"/><path d="M572.8 118.2L576 115.0L579.2 118.2L576 121.4z" fill="#000" stroke="#000" stroke-width="0.5"/><path d="M750.8 152.2L754 149.0L757.2 152.2L754 155.39999999999998z" fill="#000" stroke="#000" stroke-width="0.5"/><path d="M764.8 117.2L768 114.0L771.2 117.2L768 120.4z" fill="#000" stroke="#000" stroke-width="0.5"/><path d="M941.8 134.2L945 131.0L948.2 134.2L945 137.39999999999998z" fill="#000" stroke="#000" stroke-width="0.5"/><path d="M941.8 278.2L945 275.0L948.2 278.2L945 281.4z" fill="#000" stroke="#000" stroke-width="0.5"/><path d="M557.8 281.2L561 278.0L564.2 281.2L561 284.4z" fill="#000" stroke="#000" stroke-width="0.5"/><path d="M571.8 295.2L575 292.0L578.2 295.2L575 298.4z" fill="#000" stroke="#000" stroke-width="0.5"/><path d="M745.8 278.2L749 275.0L752.2 278.2L749 281.4z" fill="#000" stroke="#000" stroke-width="0.5"/><path d="M765.8 278.2L769 275.0L772.2 278.2L769 281.4z" fill="#000" stroke="#000" stroke-width="0.5"/></svg>
<div class="a" style="left:357px;top:508px;width:47px;height:19px;background:#f0f0f0;border:1px solid #d9d9d9"></div><div class="t" style="left:362px;top:511px">Criteria</div><div class="a" style="left:403px;top:508px;width:56px;height:19px;background:#f0f0f0;border:1px solid #d9d9d9"></div><div class="t" style="left:409px;top:511px">Selection</div><div class="a" style="left:458px;top:508px;width:91px;height:19px;background:#f0f0f0;border:1px solid #d9d9d9"></div><div class="t" style="left:464px;top:511px">Grouping criteria</div><div class="a" style="left:355px;top:527px;width:823px;height:179px;background:#fff;"></div><div class="a" style="left:1176px;top:527px;width:1px;height:178px;background:#e3e3e3"></div><div class="a" style="left:355px;top:704px;width:822px;height:1px;background:#e3e3e3"></div><div class="a" style="left:598px;top:526px;width:579px;height:1px;background:#d9d9d9"></div><div class="a" style="left:358px;top:530px;width:816px;height:172px;background:#f0f0f0;"></div><div class="a" style="left:548px;top:506px;width:50px;height:23px;background:#fff;border:1px solid #d9d9d9;border-bottom:none"></div><div class="t" style="left:555px;top:509px">Sorting</div><div class="a" style="left:359px;top:552px;width:395px;height:150px;background:#fff;border:1px solid #828790"></div><div class="a" style="left:360px;top:569px;width:375px;height:1px;background:#e5e5e5"></div><div class="t" style="left:362px;top:555px">Output fields</div><div class="a" style="left:360px;top:570px;width:375px;height:17px;background:linear-gradient(to bottom,#f8f8f8,#e4e4e4);border:1px solid #c9c9c9"></div><div class="a" style="left:360px;top:553px;width:375px;height:148px;overflow:hidden"><div class="t" style="left:1px;top:19px;letter-spacing:0">category</div><div class="t" style="left:1px;top:36px;letter-spacing:0">c.category_id</div><div class="t" style="left:1px;top:53px;letter-spacing:0">c.last_update</div><div class="t" style="left:1px;top:70px;letter-spacing:0">p.payment_id</div><div class="t" style="left:1px;top:87px;letter-spacing:0">p.customer_id</div><div class="t" style="left:1px;top:104px;letter-spacing:0">p.staff_id</div><div class="t" style="left:1px;top:121px;letter-spacing:0">p.rental_id</div><div class="t" style="left:1px;top:138px;letter-spacing:0">p.amount</div></div><div class="a" style="left:735px;top:553px;width:18px;height:148px;background:#f0f0f0;"></div><div class="a" style="left:736px;top:570px;width:15px;height:22px;background:#cdcdcd;"></div><svg style="left:739px;top:559px" width="9" height="6" viewBox="0 0 9 6"><path d="M1 4.600l3.500-3.500 3.500 3.500" stroke="#505050" stroke-width="1.600" fill="none"/></svg><svg style="left:739px;top:689px" width="9" height="6" viewBox="0 0 9 6"><path d="M1 1l3.500 3.500 3.500-3.500" stroke="#505050" stroke-width="1.600" fill="none"/></svg><svg style="left:759px;top:558px" width="14" height="14" viewBox="0 0 14 14"><defs><linearGradient id="gb759558" x1="0" y1="0" x2="0" y2="1"><stop offset="0" stop-color="#3fcf55"/><stop offset="1" stop-color="#119a2b"/></linearGradient></defs><rect x="0.500" y="0.500" width="13" height="13" rx="2" fill="url(#gb759558)" stroke="#0e8a26"/><path d="M5 3.500v7l4.500-3.500z" fill="#fff"/></svg><svg style="left:759px;top:582px" width="14" height="14" viewBox="0 0 14 14"><defs><linearGradient id="gb759582" x1="0" y1="0" x2="0" y2="1"><stop offset="0" stop-color="#3fcf55"/><stop offset="1" stop-color="#119a2b"/></linearGradient></defs><rect x="0.500" y="0.500" width="13" height="13" rx="2" fill="url(#gb759582)" stroke="#0e8a26"/><path d="M2.500 3.500v7l4-3.500zM7 3.500v7l4-3.500z" fill="#fff"/></svg><svg style="left:759px;top:606px" width="14" height="14" viewBox="0 0 14 14"><defs><linearGradient id="gb759606" x1="0" y1="0" x2="0" y2="1"><stop offset="0" stop-color="#d2d2d2"/><stop offset="1" stop-color="#b4b4b4"/></linearGradient></defs><rect x="0.500" y="0.500" width="13" height="13" rx="2" fill="url(#gb759606)" stroke="#b0b0b0"/><path d="M9 3.500v7l-4.500-3.500z" fill="#e6e6e6"/></svg><svg style="left:759px;top:630px" width="14" height="14" viewBox="0 0 14 14"><defs><linearGradient id="gb759630" x1="0" y1="0" x2="0" y2="1"><stop offset="0" stop-color="#3fcf55"/><stop offset="1" stop-color="#119a2b"/></linearGradient></defs><rect x="0.500" y="0.500" width="13" height="13" rx="2" fill="url(#gb759630)" stroke="#0e8a26"/><path d="M11.500 3.500v7l-4-3.500zM7 3.500v7l-4-3.500z" fill="#fff"/></svg><div class="a" style="left:779px;top:531px;width:33px;height:18px;background:#cccccc;border:1px solid #bfbfbf"></div><div class="t" style="left:788px;top:533px;color:#838383;text-shadow:1px 1px 0 #fff;">Up</div><div class="a" style="left:816px;top:531px;width:33px;height:18px;background:#cccccc;border:1px solid #bfbfbf"></div><div class="t" style="left:818px;top:533px;color:#838383;text-shadow:1px 1px 0 #fff;">Down</div><div class="a" style="left:1143px;top:531px;width:28px;height:18px;background:#cccccc;border:1px solid #bfbfbf"></div><div class="t" style="left:1146px;top:533px;color:#838383;text-shadow:1px 1px 0 #fff;letter-spacing:0.5px">A..Z</div><div class="a" style="left:778px;top:552px;width:392px;height:150px;background:#fff;border:1px solid #828790"></div><div class="a" style="left:973px;top:553px;width:1px;height:17px;background:#e5e5e5"></div><div class="a" style="left:1167px;top:553px;width:1px;height:17px;background:#e5e5e5"></div><div class="t" style="left:781px;top:555px">Sorted fields</div><div class="t" style="left:976px;top:555px">Sort order</div><div class="t" style="left:781px;top:572px;letter-spacing:0">total_sales</div><div class="t" style="left:975px;top:572px">Descending</div>
<div class="a" style="left:0px;top:719px;width:1190px;height:18px;background:linear-gradient(to bottom,#dce9fb 0%,#c3d9f6 50%,#8fb1e6 92%,#7a9ad3 100%);border-top:1px solid #7396d2"></div><div class="a" style="left:-1px;top:720px;width:304px;height:17px;background:transparent;border-left:1px solid #86a5da;border-right:1px solid #86a5da;box-shadow:inset 1px 1px 0 rgba(255,255,255,0.35)"></div><div class="a" style="left:305px;top:720px;width:82px;height:17px;background:transparent;border-left:1px solid #86a5da;border-right:1px solid #86a5da;box-shadow:inset 1px 1px 0 rgba(255,255,255,0.35)"></div><div class="a" style="left:389px;top:720px;width:802px;height:17px;background:transparent;border-left:1px solid #86a5da;box-shadow:inset 1px 1px 0 rgba(255,255,255,0.35)"></div><div class="t" style="left:3px;top:721px">Database: sakila at toliman</div><div class="t" style="left:321px;top:721px">1:</div><div class="t" style="left:346px;top:721px">1</div>
</body></html>
